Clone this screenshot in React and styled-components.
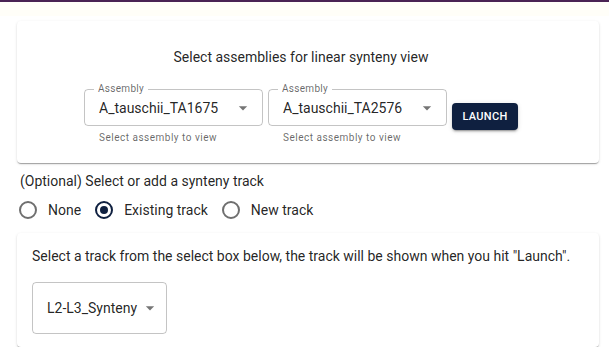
import React, { useState } from 'react';
import styled, { createGlobalStyle } from 'styled-components';

const ASSEMBLIES = ['A_tauschii_TA1675', 'A_tauschii_TA2576'];
const TRACK_OPTIONS = [
  { id: 'none', label: 'None' },
  { id: 'existing', label: 'Existing track' },
  { id: 'new', label: 'New track' }
];

const GlobalStyle = createGlobalStyle`
  body {
    margin: 0;
    background: #ffffff;
    font-family: Roboto, "Liberation Sans", sans-serif;
    color: rgba(0, 0, 0, 0.87);
  }
`;

const StyledTopLine = styled.div`
  height: 2px;
  background: #4a2353;
`;

const StyledTopBand = styled.div`
  height: 14px;
  background: #fffef8;
`;

const StyledPage = styled.div`
  padding: 5px 10px 0 17px;
  display: flex;
  flex-direction: column;
`;

const StyledCard = styled.div`
  background: #fff;
  border-radius: 4px;
  box-shadow: 0 2px 1px -1px rgba(0, 0, 0, 0.2), 0 1px 1px 0 rgba(0, 0, 0, 0.14), 0 1px 3px 0 rgba(0, 0, 0, 0.12);
  padding: ${props => props.padding};
  height: ${props => props.height}px;
  box-sizing: border-box;
`;

const StyledTitle = styled.div`
  text-align: center;
  font-size: 14px;
  line-height: 20px;
  margin-bottom: 22px;
`;

const StyledSelectRow = styled.div`
  display: flex;
  justify-content: center;
  align-items: center;
  gap: 5px;
`;

const StyledField = styled.div`
  display: flex;
  flex-direction: column;
`;

const StyledOutline = styled.div`
  position: relative;
  width: ${props => props.width}px;
  height: ${props => props.height}px;
  box-sizing: border-box;
  border: 1px solid rgba(0, 0, 0, 0.23);
  border-radius: 4px;
  display: flex;
  align-items: center;
  padding: 0 0 0 14px;
  font-size: 14px;
`;

const StyledLegend = styled.span`
  position: absolute;
  top: -7px;
  left: 9px;
  padding: 0 4px;
  background: #fff;
  font-size: 10px;
  line-height: 12px;
  color: rgba(0, 0, 0, 0.6);
  letter-spacing: 0.3px;
`;

const StyledValue = styled.span`
  flex: 1;
  white-space: nowrap;
`;

const StyledArrow = styled.svg`
  width: 20px;
  height: 20px;
  margin-right: ${props => props.right}px;
  fill: rgba(0, 0, 0, 0.54);
`;

const StyledHelper = styled.div`
  font-size: 10px;
  letter-spacing: 0.5px;
  color: rgba(0, 0, 0, 0.6);
  margin: 6px 0 0 15px;
  line-height: 12px;
`;

const StyledLaunch = styled.button`
  background: #0f2040;
  color: #fff;
  border: none;
  border-radius: 4px;
  height: 27px;
  width: 66px;
  font-family: Roboto, "Liberation Sans", sans-serif;
  font-weight: 500;
  font-size: 11px;
  letter-spacing: 0.3px;
  box-shadow: 0 3px 1px -2px rgba(0, 0, 0, 0.2), 0 2px 2px 0 rgba(0, 0, 0, 0.14), 0 1px 5px 0 rgba(0, 0, 0, 0.12);
  cursor: pointer;
  padding: 0;
`;

const StyledOptional = styled.div`
  font-size: 14px;
  line-height: 20px;
  margin: 8px 0 0 3px;
`;

const StyledRadioGroup = styled.div`
  display: flex;
  align-items: center;
  margin: 10px 0 14px 2px;
`;

const StyledRadioLabel = styled.label`
  display: flex;
  align-items: center;
  font-size: 14px;
  margin-right: 14px;
  cursor: pointer;
`;

const StyledRadioCircle = styled.span`
  width: 18px;
  height: 18px;
  box-sizing: border-box;
  border-radius: 50%;
  border: 2px solid ${props => (props.checked ? '#0f2040' : '#6f6f6f')};
  margin: 0 11px 0 0;
  display: flex;
  align-items: center;
  justify-content: center;

  &::after {
    content: '';
    width: 8px;
    height: 8px;
    border-radius: 50%;
    background: #0f2040;
    display: ${props => (props.checked ? 'block' : 'none')};
  }
`;

const StyledHint = styled.div`
  font-size: 14px;
  line-height: 20px;
  margin-bottom: 16px;
  white-space: nowrap;
`;

const Arrow = ({ right }) => (
  <StyledArrow viewBox="0 0 24 24" right={right}>
    <path d="M7 10l5 5 5-5z" />
  </StyledArrow>
);

const App = () => {
  const [track, setTrack] = useState('existing');

  return (
    <>
      <GlobalStyle />
      <StyledTopLine />
      <StyledTopBand />
      <StyledPage>
        <StyledCard padding="26px 14px 0 0" height={142}>
          <StyledTitle>Select assemblies for linear synteny view</StyledTitle>
          <StyledSelectRow>
            {ASSEMBLIES.map(item => (
              <StyledField key={item}>
                <StyledOutline width={179} height={37}>
                  <StyledLegend>Assembly</StyledLegend>
                  <StyledValue>{item}</StyledValue>
                  <Arrow right={9} />
                </StyledOutline>
                <StyledHelper>Select assembly to view</StyledHelper>
              </StyledField>
            ))}
            <StyledLaunch>LAUNCH</StyledLaunch>
          </StyledSelectRow>
        </StyledCard>

        <StyledOptional>(Optional) Select or add a synteny track</StyledOptional>
        <StyledRadioGroup>
          {TRACK_OPTIONS.map(item => (
            <StyledRadioLabel key={item.id} onClick={() => setTrack(item.id)}>
              <StyledRadioCircle checked={track === item.id} />
              {item.label}
            </StyledRadioLabel>
          ))}
        </StyledRadioGroup>

        <StyledCard padding="13px 15px 0" height={114}>
          <StyledHint>Select a track from the select box below, the track will be shown when you hit "Launch".</StyledHint>
          <StyledOutline width={135} height={52}>
            <StyledValue>L2-L3_Synteny</StyledValue>
            <Arrow right={6} />
          </StyledOutline>
        </StyledCard>
      </StyledPage>
    </>
  );
};

export default App;
